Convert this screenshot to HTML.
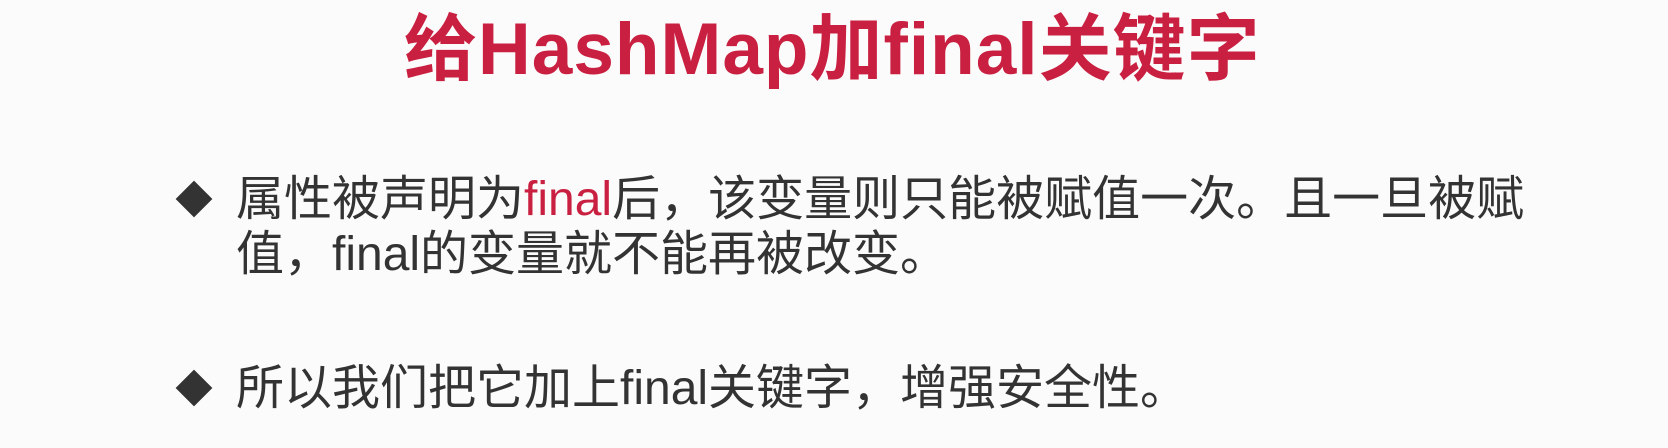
<!DOCTYPE html>
<html><head><meta charset="utf-8"><style>
body{margin:0;width:1668px;height:448px;background:#fbfbfb;overflow:hidden;position:relative;font-family:"Liberation Sans","Noto Sans CJK SC",sans-serif}
.t{position:absolute;left:404px;top:10px;font-size:73px;font-weight:bold;color:#c91f40;white-space:nowrap;line-height:80px;letter-spacing:1px}
.p{position:absolute;left:236px;font-size:48px;color:#333;line-height:55px;white-space:nowrap}
.d{position:absolute;width:26px;height:26px;background:#333;transform:rotate(45deg)}
.r{color:#c91f40}
</style></head><body>
<div class="t">给HashMap加final关键字</div>
<div class="d" style="left:181px;top:186px"></div>
<div class="p" style="top:172px">属性被声明为<span class="r">final</span>后，该变量则只能被赋值一次。且一旦被赋<br>值，final的变量就不能再被改变。</div>
<div class="d" style="left:181px;top:375px"></div>
<div class="p" style="top:361px">所以我们把它加上final关键字，增强安全性。</div>
</body></html>
